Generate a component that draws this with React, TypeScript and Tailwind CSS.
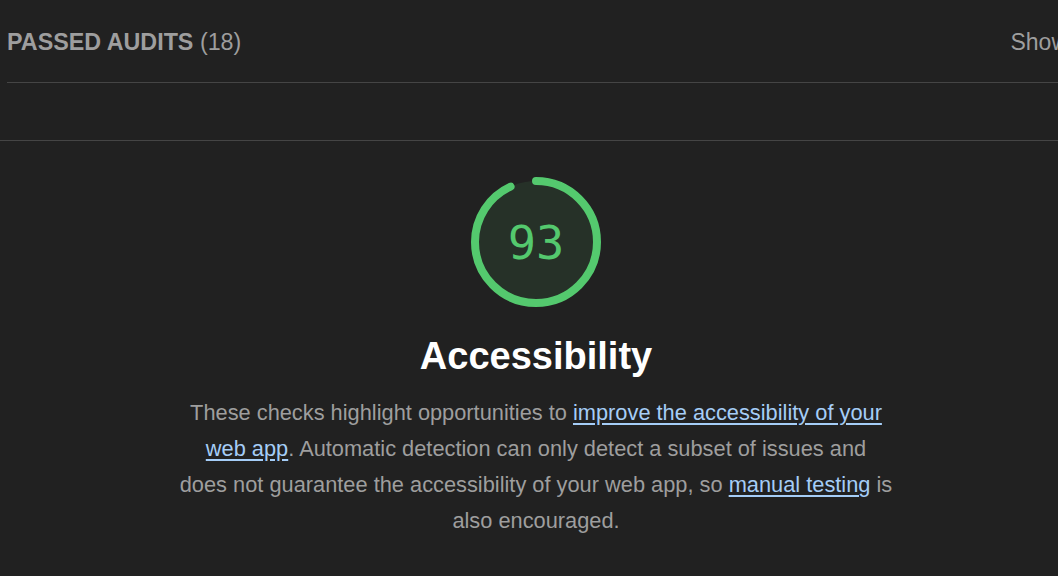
import React from "react";

function Gauge({ score }: { score: number }) {
  const r = 61;
  const c = 2 * Math.PI * r;
  const len = (score / 100) * c;
  return (
    <div className="relative w-[130px] h-[130px]">
      <svg width="130" height="130" viewBox="0 0 130 130" className="absolute inset-0">
        <circle cx="65" cy="65" r={r} fill="rgba(84,201,110,0.1)" />
        <circle
          cx="65"
          cy="65"
          r={r}
          fill="none"
          stroke="#54c96e"
          strokeWidth="8"
          strokeLinecap="round"
          strokeDasharray={`${len} ${c}`}
          transform="rotate(-90 65 65)"
        />
      </svg>
      <div className="absolute inset-0 flex items-center justify-center text-[47px] leading-none text-[#54c96e] font-['DejaVu_Sans_Mono',monospace]">
        {score}
      </div>
    </div>
  );
}

export default function App() {
  const link = "text-[#a5cdf7] underline decoration-[#a5cdf7] underline-offset-[3px]";
  return (
    <div className="w-[1058px] h-[576px] overflow-hidden bg-[#212121] font-['Liberation_Sans',Arial,sans-serif]">
      <div className="pl-[7px]">
        <div className="h-[83px] pt-[3px] flex items-center justify-between border-b border-[#454545] whitespace-nowrap">
          <div className="text-[23.3px] text-[#9e9e9e]">
            <span className="font-bold">PASSED AUDITS</span> <span>(18)</span>
          </div>
          <div className="text-[23px] text-[#9e9e9e] mr-[-10px]">Show</div>
        </div>
      </div>
      <div className="h-[58px] border-b border-[#454545]" />
      <div className="flex flex-col items-center pt-[36px] pl-[14px]">
        <Gauge score={93} />
        <h2 className="mt-[27px] text-[38px] leading-[44px] font-bold text-white">Accessibility</h2>
        <p className="mt-[17px] w-[760px] text-center text-[21.8px] leading-[36px] text-[#9e9e9e]">
          These checks highlight opportunities to{" "}
          <a className={link}>
            improve the accessibility of your
            <br />
            web app
          </a>
          . Automatic detection can only detect a subset of issues and
          <br />
          does not guarantee the accessibility of your web app, so{" "}
          <a className={link}>manual testing</a> is
          <br />
          also encouraged.
        </p>
      </div>
    </div>
  );
}
